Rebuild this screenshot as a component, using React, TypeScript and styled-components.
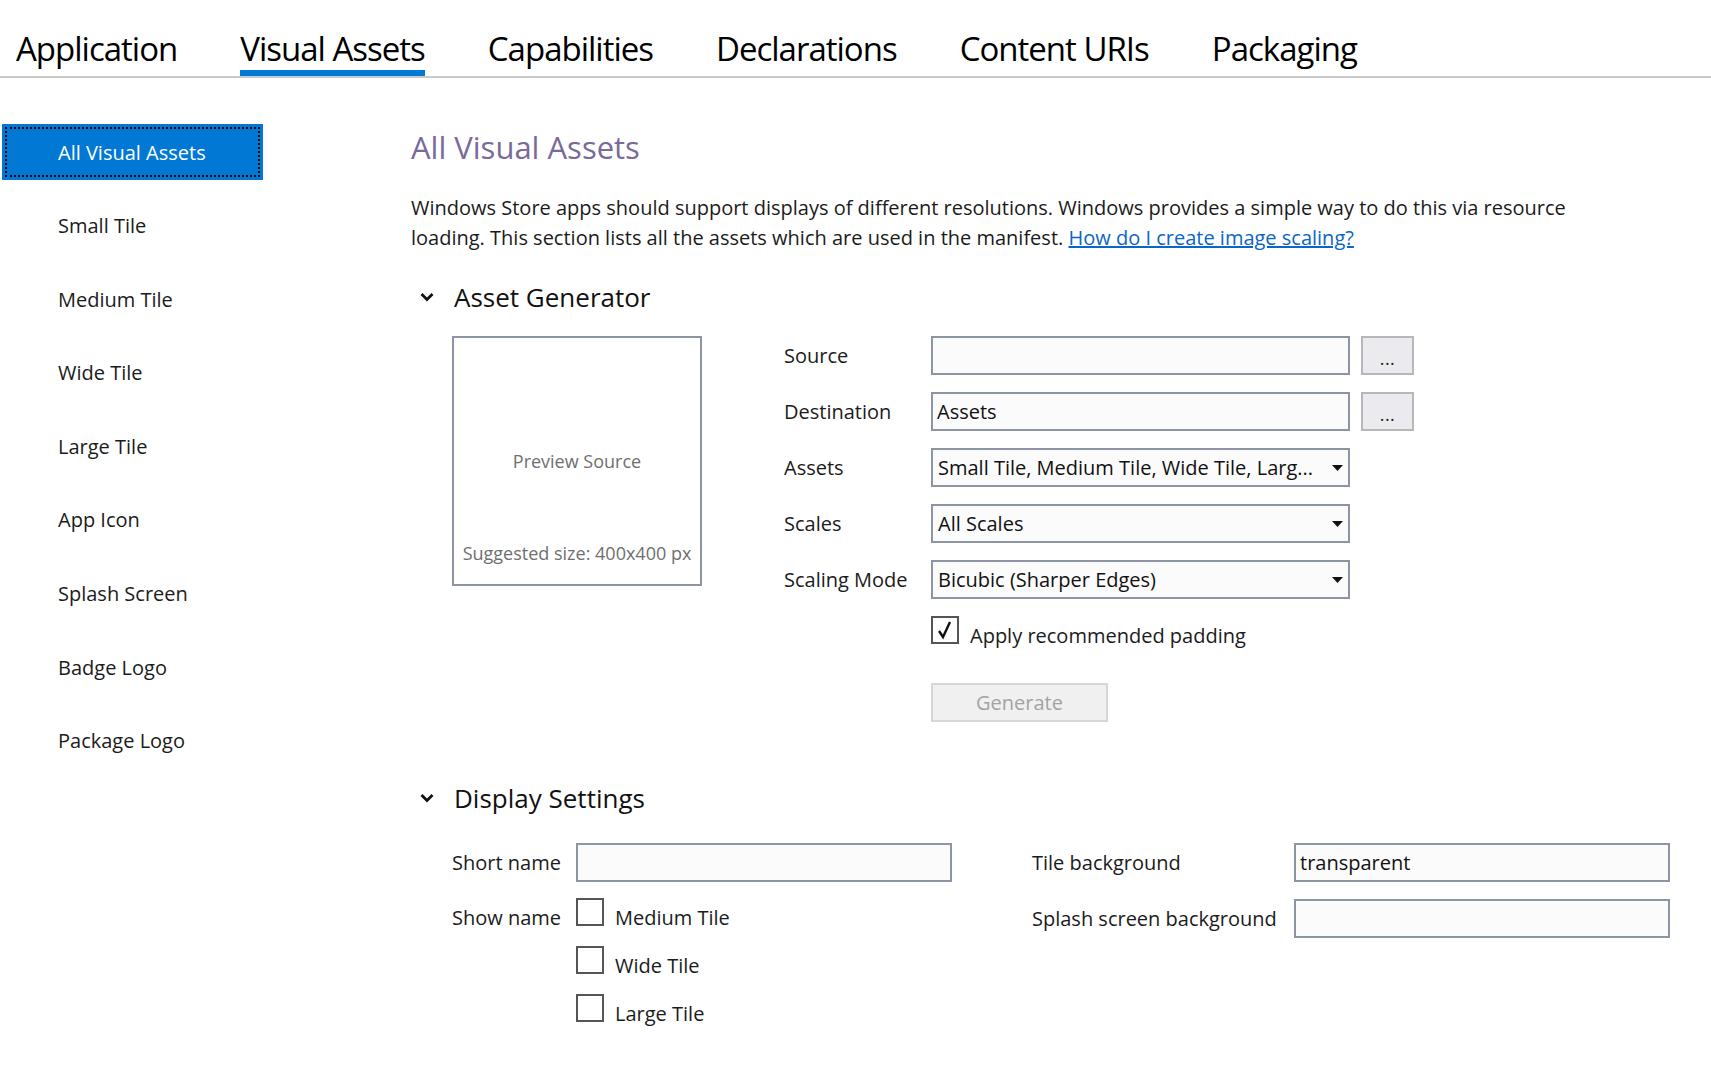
import React from "react";
import styled, { createGlobalStyle } from "styled-components";

const GlobalStyle = createGlobalStyle`
  html, body { margin: 0; padding: 0; background: #ffffff; }
  body { font-family: "Open Sans", "Segoe UI", sans-serif; color: #1b1b1b; }
  * { box-sizing: border-box; }
`;

const Page = styled.div`
  width: 1711px;
  min-height: 1072px;
`;

const TabBar = styled.nav`
  display: flex;
  gap: 63px;
  padding-left: 16px;
  height: 78px;
  border-bottom: 2px solid #c9c9c9;
`;

const Tab = styled.div<{ $active?: boolean }>`
  height: 76px;
  padding-top: 27px;
  font-size: 33px;
  line-height: 43px;
  letter-spacing: -1px;
  color: #000;
  border-bottom: 6px solid ${(p) => (p.$active ? "#0078d4" : "transparent")};
`;

const Body = styled.div`
  display: flex;
`;

const Sidebar = styled.aside`
  width: 411px;
  flex-shrink: 0;
  padding: 46px 0 0 2px;
  display: flex;
  flex-direction: column;
  gap: 17.6px;
`;

const NavItem = styled.div<{ $selected?: boolean }>`
  width: 261px;
  height: 56px;
  display: flex;
  align-items: center;
  padding-left: 56px;
  font-size: 20px;
  background: ${(p) => (p.$selected ? "#0078d4" : "transparent")};
  color: ${(p) => (p.$selected ? "#ffffff" : "#1b1b1b")};
  outline: ${(p) => (p.$selected ? "2px dotted #000" : "none")};
  outline-offset: -5px;
`;

const Main = styled.main`
  flex: 1;
  padding-top: 49px;
`;

const Title = styled.h1`
  margin: 0;
  font-size: 31px;
  line-height: 40px;
  font-weight: 400;
  color: #7a6a9c;
`;

const Intro = styled.p`
  margin: 26px 0 0;
  font-size: 20px;
  line-height: 30px;
  white-space: nowrap;
`;

const HelpLink = styled.a`
  color: #0a66c8;
  text-decoration: underline;
`;

const SectionHeader = styled.div<{ $top: number }>`
  display: flex;
  align-items: center;
  gap: 20px;
  padding-left: 9px;
  margin-top: ${(p) => p.$top}px;
  font-size: 26px;
  line-height: 34px;
  color: #111;
`;

const Generator = styled.div`
  display: flex;
  align-items: flex-start;
  margin-top: 22px;
  padding-left: 41px;
  gap: 82px;
`;

const Preview = styled.div`
  width: 250px;
  height: 250px;
  border: 2px solid #8d95a5;
  display: grid;
  grid-template-rows: 1fr auto 1fr;
  justify-items: center;
  color: #6f6f6f;
  font-size: 18px;
  line-height: 24px;
`;

const PreviewCaption = styled.div`
  grid-row: 2;
`;

const PreviewHint = styled.div`
  grid-row: 3;
  align-self: end;
  padding-bottom: 19px;
`;

const Form = styled.div`
  display: grid;
  grid-template-columns: 136px 419px 53px;
  grid-template-rows: repeat(5, 39px) 28px auto;
  column-gap: 11px;
  row-gap: 17px;
  align-items: center;
`;

const FieldLabel = styled.div`
  grid-column: 1;
  font-size: 20px;
  line-height: 28px;
  white-space: nowrap;
  color: #1b1b1b;
`;

const TextInput = styled.input`
  width: 100%;
  height: 39px;
  border: 2px solid #8d95a5;
  background: #fbfbfb;
  padding: 0 4px;
  font-family: inherit;
  font-size: 20px;
  color: #111;
  outline: none;
  border-radius: 0;
`;

const Dropdown = styled.div`
  grid-column: 2;
  height: 39px;
  border: 2px solid #8d95a5;
  background: #fbfbfb;
  padding: 0 5px 0 5px;
  display: flex;
  align-items: center;
  justify-content: space-between;
  font-size: 20px;
  color: #111;
  white-space: nowrap;
`;

const Browse = styled.button`
  height: 39px;
  border: 2px solid #b7b7b7;
  background: #ebebef;
  padding: 0 0 6px;
  display: flex;
  align-items: flex-end;
  justify-content: center;
  font-family: inherit;
  font-size: 18px;
  line-height: 18px;
  letter-spacing: 0.5px;
  color: #222;
  border-radius: 0;
`;

const CheckRow = styled.label`
  display: flex;
  align-items: flex-start;
  gap: 11px;
  height: 28px;
  font-size: 20px;
  line-height: 28px;
  white-space: nowrap;
`;

const CheckText = styled.span`
  padding-top: 6px;
`;

const Box = styled.span`
  width: 28px;
  height: 28px;
  flex-shrink: 0;
  border: 2px solid #555;
  background: #fff;
  display: flex;
  align-items: center;
  justify-content: center;
`;

const SpanRow = styled.div`
  grid-column: 2 / -1;
`;

const GenerateButton = styled.button`
  margin-top: 22px;
  width: 177px;
  height: 39px;
  border: 2px solid #d6d6d6;
  background: #f0f0f0;
  color: #a3a3a3;
  font-family: inherit;
  font-size: 20px;
  border-radius: 0;
`;

const Display = styled.div`
  display: flex;
  align-items: flex-start;
  gap: 80px;
  margin-top: 28px;
  padding-left: 41px;
`;

const DisplayGroup = styled.div<{ $label: number; $gap: number }>`
  display: grid;
  grid-template-columns: ${(p) => p.$label}px 376px;
  align-content: start;
  row-gap: ${(p) => p.$gap}px;
  align-items: center;
`;

const ShowLabel = styled(FieldLabel)`
  align-self: start;
  padding-top: 6px;
`;

const CheckList = styled.div`
  display: flex;
  flex-direction: column;
  gap: 20px;
`;

const Chevron = () => (
  <svg width="14" height="10" viewBox="0 0 14 10">
    <polyline points="1.5,2 7,7.5 12.5,2" fill="none" stroke="#111" strokeWidth="2.8" />
  </svg>
);

const Caret = () => (
  <svg width="11" height="6" viewBox="0 0 11 6">
    <polygon points="0,0 11,0 5.5,6" fill="#111" />
  </svg>
);

const Check = () => (
  <svg width="18" height="20" viewBox="0 0 18 20">
    <polyline points="3,11 7,17 14,2" fill="none" stroke="#111" strokeWidth="2.4" />
  </svg>
);

const CheckBox = ({ checked, label }: { checked?: boolean; label: string }) => (
  <CheckRow>
    <Box>{checked && <Check />}</Box>
    <CheckText>{label}</CheckText>
  </CheckRow>
);

const tabs = ["Application", "Visual Assets", "Capabilities", "Declarations", "Content URIs", "Packaging"];
const navItems = [
  "All Visual Assets",
  "Small Tile",
  "Medium Tile",
  "Wide Tile",
  "Large Tile",
  "App Icon",
  "Splash Screen",
  "Badge Logo",
  "Package Logo",
];

export default function App() {
  return (
    <Page>
      <GlobalStyle />
      <TabBar>
        {tabs.map((t) => (
          <Tab key={t} $active={t === "Visual Assets"}>
            {t}
          </Tab>
        ))}
      </TabBar>
      <Body>
        <Sidebar>
          {navItems.map((n, i) => (
            <NavItem key={n} $selected={i === 0}>
              {n}
            </NavItem>
          ))}
        </Sidebar>
        <Main>
          <Title>All Visual Assets</Title>
          <Intro>
            Windows Store apps should support displays of different resolutions. Windows provides a simple way to do this via resource
            <br />
            loading. This section lists all the assets which are used in the manifest.{" "}
            <HelpLink href="#">How do I create image scaling?</HelpLink>
          </Intro>

          <SectionHeader $top={27}>
            <Chevron />
            <span>Asset Generator</span>
          </SectionHeader>

          <Generator>
            <Preview>
              <PreviewCaption>Preview Source</PreviewCaption>
              <PreviewHint>Suggested size: 400x400 px</PreviewHint>
            </Preview>
            <Form>
              <FieldLabel>Source</FieldLabel>
              <TextInput readOnly defaultValue="" />
              <Browse>...</Browse>

              <FieldLabel>Destination</FieldLabel>
              <TextInput readOnly defaultValue="Assets" />
              <Browse>...</Browse>

              <FieldLabel>Assets</FieldLabel>
              <Dropdown>
                <span>Small Tile, Medium Tile, Wide Tile, Larg...</span>
                <Caret />
              </Dropdown>

              <FieldLabel>Scales</FieldLabel>
              <Dropdown>
                <span>All Scales</span>
                <Caret />
              </Dropdown>

              <FieldLabel>Scaling Mode</FieldLabel>
              <Dropdown>
                <span>Bicubic (Sharper Edges)</span>
                <Caret />
              </Dropdown>

              <SpanRow>
                <CheckBox checked label="Apply recommended padding" />
              </SpanRow>
              <SpanRow>
                <GenerateButton disabled>Generate</GenerateButton>
              </SpanRow>
            </Form>
          </Generator>

          <SectionHeader $top={59}>
            <Chevron />
            <span>Display Settings</span>
          </SectionHeader>

          <Display>
            <DisplayGroup $label={124} $gap={16}>
              <FieldLabel>Short name</FieldLabel>
              <TextInput readOnly defaultValue="" />
              <ShowLabel>Show name</ShowLabel>
              <CheckList>
                <CheckBox label="Medium Tile" />
                <CheckBox label="Wide Tile" />
                <CheckBox label="Large Tile" />
              </CheckList>
            </DisplayGroup>
            <DisplayGroup $label={262} $gap={17}>
              <FieldLabel>Tile background</FieldLabel>
              <TextInput readOnly defaultValue="transparent" />
              <FieldLabel>Splash screen background</FieldLabel>
              <TextInput readOnly defaultValue="" />
            </DisplayGroup>
          </Display>
        </Main>
      </Body>
    </Page>
  );
}
